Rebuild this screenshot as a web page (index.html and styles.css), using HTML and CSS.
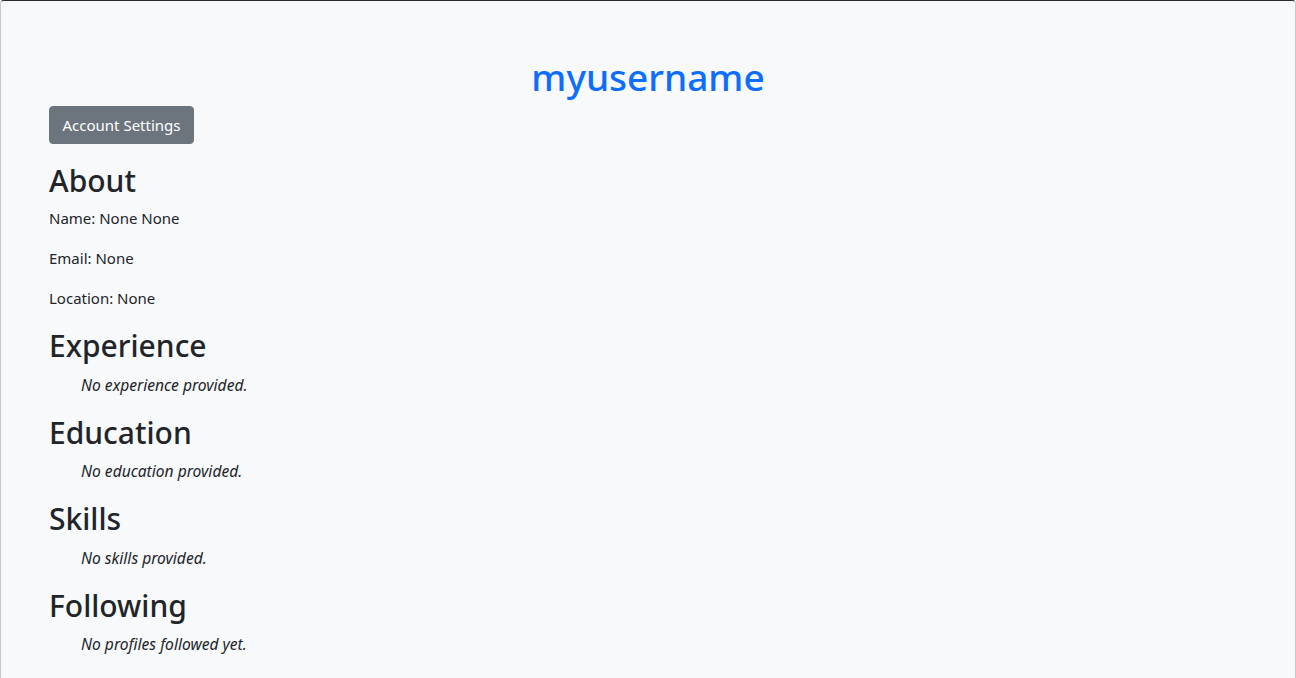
FILE: index.html
```html
<!DOCTYPE html>
<html lang="en">
<head>
<meta charset="utf-8">
<title>myusername</title>
<link rel="stylesheet" href="styles.css">
</head>
<body>
<div class="frame">
  <main class="profile">
    <h1 class="username">myusername</h1>
    <div class="actions">
      <a class="btn" href="#">Account Settings</a>
    </div>
    <h2 class="section-title">About</h2>
    <div class="fields">
      <p class="field">Name: None None</p>
      <p class="field">Email: None</p>
      <p class="field">Location: None</p>
    </div>
    <h2 class="section-title">Experience</h2>
    <ul class="items"><li><em>No experience provided.</em></li></ul>
    <h2 class="section-title">Education</h2>
    <ul class="items"><li><em>No education provided.</em></li></ul>
    <h2 class="section-title">Skills</h2>
    <ul class="items"><li><em>No skills provided.</em></li></ul>
    <h2 class="section-title">Following</h2>
    <ul class="items"><li><em>No profiles followed yet.</em></li></ul>
  </main>
</div>
</body>
</html>
```
FILE: styles.css
```css
* { box-sizing: border-box; }
html, body { margin: 0; padding: 0; }
body {
  background: #f8f9fa;
  color: #212529;
  font-family: "Noto Sans", "Open Sans", sans-serif;
  font-size: 15px;
  line-height: 24px;
}
.frame {
  min-height: 678px;
  border: 1px solid #c8c9ca;
  border-top: 1px solid #2a2b2d;
  border-bottom: none;
  border-radius: 4px 4px 0 0;
  background: #f8f9fa;
}
.profile {
  padding: 52px 48px 0 48px;
}
.username {
  margin: 0 0 5px 0;
  text-align: center;
  color: #0d6efd;
  font-size: 37px;
  font-weight: 500;
  line-height: 48px;
}
.actions { margin-bottom: 18px; }
.btn {
  display: inline-block;
  background: #6c757d;
  color: #fff;
  text-decoration: none;
  font-size: 15px;
  line-height: 24px;
  padding: 6px 12px;
  border: 1px solid #6c757d;
  border-radius: 4px;
  min-width: 145px;
  text-align: center;
}
.section-title {
  margin: 0 0 7px 0;
  font-size: 30px;
  font-weight: 500;
  line-height: 38.4px;
}
.fields {
  margin: -1px 0 17px 0;
  display: flex;
  flex-direction: column;
  gap: 16px;
}
.field { margin: 0; }
.items {
  list-style: none;
  margin: 0 0 17px 0;
  padding-left: 32px;
}
.items em { font-size: 15.6px; }
```
